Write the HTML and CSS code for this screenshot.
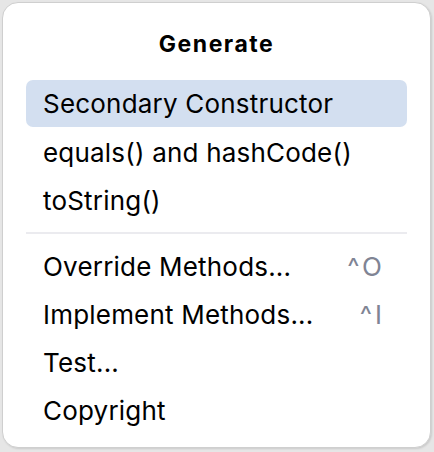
FILE: index.html
```html
<!DOCTYPE html>
<html>
<head>
<meta charset="utf-8">
<link rel="stylesheet" href="styles.css">
</head>
<body>
<div class="popup">
  <div class="title">Generate</div>
  <ul class="list">
    <li class="item selected"><span class="label">Secondary Constructor</span></li>
    <li class="item"><span class="label">equals() and hashCode()</span></li>
    <li class="item"><span class="label">toString()</span></li>
  </ul>
  <div class="sep"></div>
  <ul class="list">
    <li class="item"><span class="label">Override Methods...</span><span class="key">^O</span></li>
    <li class="item"><span class="label">Implement Methods...</span><span class="key">^I</span></li>
    <li class="item"><span class="label">Test...</span></li>
    <li class="item"><span class="label">Copyright</span></li>
  </ul>
</div>
</body>
</html>
```

FILE: styles.css
```css
html, body {
  margin: 0;
  padding: 0;
}
body {
  width: 434px;
  height: 452px;
  background: #e6e6e6;
  font-family: Inter, "Noto Sans", sans-serif;
  color: #000;
  padding: 2px 3px 4px 2px;
  box-sizing: border-box;
}
.popup {
  height: 100%;
  box-sizing: border-box;
  background: #fff;
  border: 1px solid #cfcfcf;
  border-radius: 16px;
  box-shadow: 1px 1px 2px rgba(0,0,0,0.12);
  padding: 0 23px 0 23px;
}
.title {
  height: 77px;
  padding-top: 4px;
  box-sizing: border-box;
  display: flex;
  align-items: center;
  justify-content: center;
  font-weight: 700;
  font-size: 23px;
  letter-spacing: 1.5px;
}
.list {
  list-style: none;
  margin: 0;
  padding: 0;
}
.item {
  height: 48px;
  display: flex;
  align-items: center;
  justify-content: space-between;
  padding: 0 22px 0 17px;
  border-radius: 7px;
  font-size: 26px;
  letter-spacing: 0.2px;
}
.item.selected {
  background: #d3dff0;
  height: 47px;
  margin-bottom: 1px;
}
.key {
  color: #808494;
  letter-spacing: 3px;
}
.sep {
  height: 2px;
  background: #ebebef;
  margin: 8px 0;
}
```
